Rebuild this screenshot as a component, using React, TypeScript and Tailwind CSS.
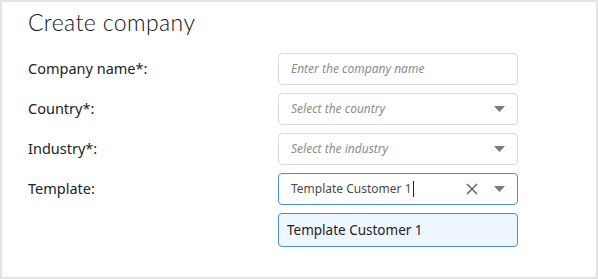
import { useState } from "react";

const fieldBase =
  "flex items-center w-[240px] h-[32px] rounded-[4px] border bg-white";

const Caret = () => (
  <svg width="11" height="6" viewBox="0 0 11 6" className="shrink-0">
    <path d="M0 0 L11 0 L5.5 6 Z" fill="#7a7a7a" />
  </svg>
);

const App = () => {
  const [template, setTemplate] = useState<string>("Template Customer 1");

  const rows = [
    { label: "Company name*:", placeholder: "Enter the company name", select: false },
    { label: "Country*:", placeholder: "Select the country", select: true },
    { label: "Industry*:", placeholder: "Select the industry", select: true },
  ];

  return (
    <div className="w-[598px] h-[279px] bg-white font-['Noto_Sans',sans-serif]">
      <div className="h-full border-2 border-[#e3e3e3] pl-[26px] pt-[5px]">
        <h1 className="text-[23px] leading-[30px] font-light text-[#111] font-['Lato',sans-serif] tracking-[0.4px]">
          Create company
        </h1>

        <div className="mt-[16px] flex flex-col gap-[8px]">
          {rows.map(({ label, placeholder, select }) => (
            <div key={label} className="flex items-center">
              <span className="w-[250px] text-[14.5px] text-[#222]">{label}</span>
              <div className={`${fieldBase} border-[#dcdcdc] pl-[12px] pr-[12px]`}>
                <span className="flex-1 text-[12px] italic text-[#8c8c8c]">{placeholder}</span>
                {select && <Caret />}
              </div>
            </div>
          ))}

          <div className="flex items-center">
            <span className="w-[250px] text-[14.5px] text-[#222]">Template:</span>
            <div className={`${fieldBase} border-[#4a8fd8] pl-[12px] pr-[12px]`}>
              <span className="flex-1 flex items-center text-[12px] text-[#4a4a4a]">
                {template}
                <span className="ml-[1px] w-px h-[16px] bg-[#222]" />
              </span>
              <button onClick={() => setTemplate("")} className="mr-[16px]">
                <svg width="12" height="12" viewBox="0 0 12 12">
                  <path d="M1 1 L11 11 M11 1 L1 11" stroke="#6b6b6b" strokeWidth="1.6" />
                </svg>
              </button>
              <Caret />
            </div>
          </div>

          <div className="flex">
            <span className="w-[250px]" />
            <div className="flex items-center w-[240px] h-[34px] rounded-[4px] border border-[#4a8fd8] bg-[#eef6ff] pl-[8px] text-[13.5px] text-[#1e1e1e]">
              Template Customer 1
            </div>
          </div>
        </div>
      </div>
    </div>
  );
};

export default App;
